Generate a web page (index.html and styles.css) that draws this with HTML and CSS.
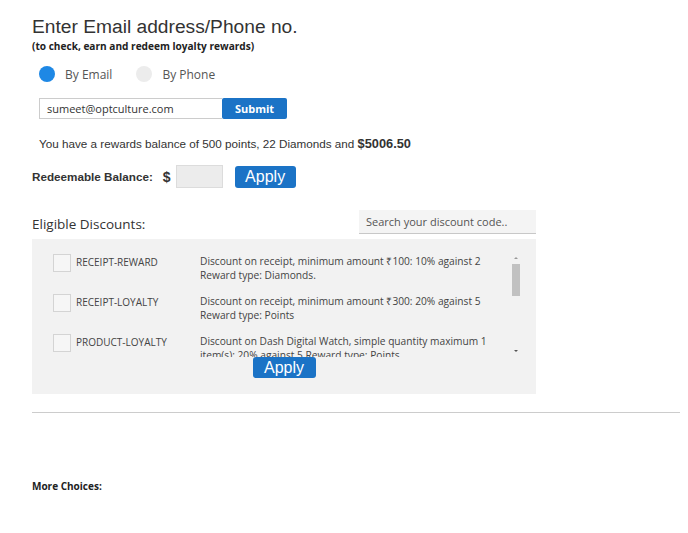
FILE: index.html
```html
<!DOCTYPE html>
<html>
<head>
<meta charset="utf-8">
<link rel="stylesheet" href="styles.css">
</head>
<body>
<div class="page">
  <h1 class="title">Enter Email address/Phone no.</h1>
  <div class="subtitle">(to check, earn and redeem loyalty rewards)</div>
  <div class="inner">
    <div class="radios">
      <label class="radio"><span class="dot dot-on"></span>By Email</label>
      <label class="radio"><span class="dot"></span>By Phone</label>
    </div>
    <div class="email-row">
      <div class="email-input">sumeet@optculture.com</div>
      <button class="btn btn-submit">Submit</button>
    </div>
    <p class="balance">You have a rewards balance of 500 points, 22 Diamonds and <b>$5006.50</b></p>
  </div>
  <div class="redeem-row">
    <span class="redeem-label">Redeemable Balance:</span>
    <span class="dollar">$</span>
    <div class="amount-input"></div>
    <button class="btn btn-apply">Apply</button>
  </div>
  <div class="eligible-head">
    <span class="eligible-title">Eligible Discounts:</span>
    <div class="search">Search your discount code..</div>
  </div>
  <div class="panel">
    <div class="list-wrap">
      <div class="list">
        <div class="row">
          <span class="check"></span>
          <span class="code">RECEIPT-REWARD</span>
          <span class="desc">Discount on receipt, minimum amount ₹100: 10% against 2<br>Reward type: Diamonds.</span>
        </div>
        <div class="row">
          <span class="check"></span>
          <span class="code">RECEIPT-LOYALTY</span>
          <span class="desc">Discount on receipt, minimum amount ₹300: 20% against 5<br>Reward type: Points</span>
        </div>
        <div class="row">
          <span class="check"></span>
          <span class="code">PRODUCT-LOYALTY</span>
          <span class="desc">Discount on Dash Digital Watch, simple quantity maximum 1<br>item(s): 20% against 5 Reward type: Points</span>
        </div>
      </div>
      <div class="scrollbar">
        <span class="arrow arrow-up"></span>
        <span class="thumb"></span>
        <span class="track"></span>
        <span class="arrow arrow-down"></span>
      </div>
    </div>
    <div class="panel-foot">
      <button class="btn btn-apply btn-apply2">Apply</button>
    </div>
  </div>
  <hr class="divider">
  <div class="more">More Choices:</div>
</div>
</body>
</html>
```

FILE: styles.css
```css
html, body {
  margin: 0;
  padding: 0;
  background: #fff;
}
.page {
  padding: 15px 8px 0 32px;
  color: #333;
  font-family: "Open Sans", sans-serif;
}
.title {
  margin: 0;
  font-family: "Liberation Sans", Arial, sans-serif;
  font-weight: normal;
  font-size: 19.2px;
  line-height: 24px;
  color: #333;
}
.subtitle {
  font-family: "Open Sans", sans-serif;
  font-weight: bold;
  font-size: 10.1px;
  line-height: 14px;
  margin-top: 0;
  color: #222;
}
.inner {
  padding-left: 7px;
}
.radios {
  display: flex;
  align-items: center;
  gap: 24px;
  margin-top: 13px;
  height: 16px;
}
.radio {
  display: flex;
  align-items: center;
  gap: 10px;
  font-size: 12px;
  color: #555;
}
.dot {
  width: 16px;
  height: 16px;
  border-radius: 50%;
  background: #ececec;
}
.dot-on {
  background: #1e88e5;
}
.email-row {
  display: flex;
  margin-top: 16px;
  height: 21px;
}
.email-input {
  width: 175px;
  border: 1px solid #ccc;
  border-right: none;
  font-size: 11px;
  line-height: 19px;
  padding-left: 7px;
  color: #333;
}
.btn {
  border: none;
  background: #1b73c6;
  color: #fff;
  font-family: "Open Sans", sans-serif;
  border-radius: 2px;
  padding: 0;
  cursor: pointer;
}
.btn-submit {
  width: 65px;
  height: 21px;
  font-weight: bold;
  font-size: 11px;
}
.balance {
  margin: 17px 0 0;
  font-family: "Liberation Sans", Arial, sans-serif;
  font-size: 11.7px;
  line-height: 15px;
  color: #333;
}
.balance b {
  font-size: 12.8px;
}
.redeem-row {
  display: flex;
  align-items: center;
  margin-top: 14px;
  height: 23px;
  font-family: "Liberation Sans", Arial, sans-serif;
}
.redeem-label {
  font-weight: bold;
  font-size: 11.7px;
  color: #333;
}
.dollar {
  font-weight: bold;
  font-size: 14px;
  margin-left: 10px;
}
.amount-input {
  width: 45px;
  height: 21px;
  margin-left: 5px;
  background: #ececec;
  border: 1px solid #dcdcdc;
}
.btn-apply {
  width: 61px;
  height: 22px;
  font-family: "Liberation Sans", Arial, sans-serif;
  font-size: 16px;
  margin-left: 12px;
  border-radius: 3px;
}
.eligible-head {
  display: flex;
  align-items: flex-end;
  justify-content: space-between;
  width: 504px;
  margin-top: 22px;
}
.eligible-title {
  font-size: 13.5px;
  line-height: 18px;
  margin-bottom: 1px;
  color: #333;
}
.search {
  width: 170px;
  height: 23px;
  padding-left: 7px;
  background: #f4f4f4;
  border-bottom: 1px solid #c8c8c8;
  font-size: 11px;
  line-height: 23px;
  color: #555;
}
.panel {
  width: 504px;
  height: 155px;
  margin-top: 5px;
  background: #f2f2f2;
}
.list-wrap {
  display: flex;
  padding: 14px 0 0 21px;
  height: 104px;
}
.list {
  width: 457px;
  overflow: hidden;
}
.row {
  display: flex;
  align-items: flex-start;
  height: 40px;
}
.check {
  flex: none;
  width: 16px;
  height: 16px;
  border: 1px solid #d4d4d4;
  background: #f6f6f6;
  margin-top: 1px;
}
.code {
  flex: none;
  width: 124px;
  margin-left: 5px;
  font-size: 10px;
  line-height: 19px;
  color: #444;
}
.desc {
  font-size: 10.2px;
  line-height: 14px;
  color: #444;
  margin-top: 1px;
}
.scrollbar {
  display: flex;
  flex-direction: column;
  align-items: center;
  width: 10px;
  margin-left: 1px;
}
.arrow {
  width: 0;
  height: 0;
  border-left: 2px solid transparent;
  border-right: 2px solid transparent;
  margin: 4px 0 5px;
}
.arrow-up {
  border-bottom: 2px solid #999;
}
.arrow-down {
  border-top: 2px solid #555;
}
.thumb {
  width: 8px;
  height: 32px;
  background: #c1c1c1;
}
.track {
  flex: 1;
}
.panel-foot {
  display: flex;
  justify-content: center;
  margin-top: 0;
}
.btn-apply2 {
  margin-left: 0;
  width: 63px;
  height: 21px;
}
.divider {
  border: none;
  border-top: 1px solid #ccc;
  margin: 18px 0 0;
  height: 0;
}
.more {
  margin-top: 66px;
  font-weight: bold;
  font-size: 10px;
  color: #222;
}
```
